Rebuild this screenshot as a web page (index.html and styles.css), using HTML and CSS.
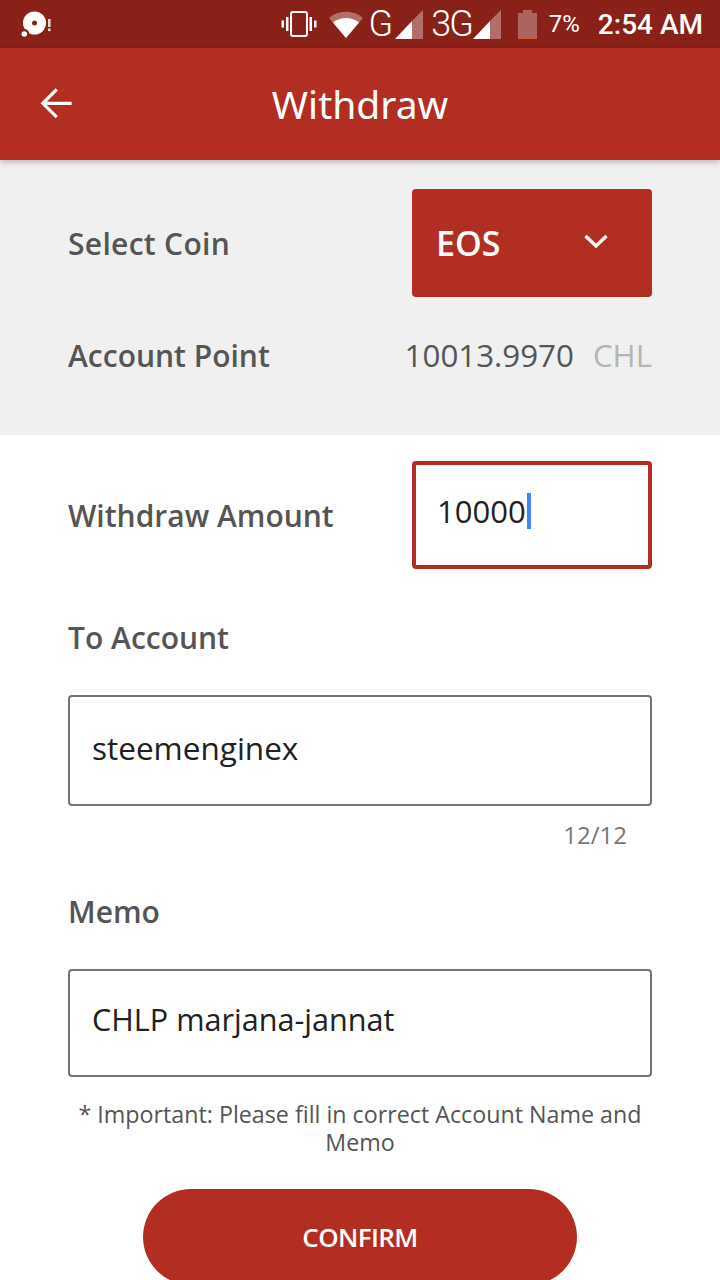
FILE: index.html
```html
<!DOCTYPE html>
<html lang="en">
<head>
  <meta charset="UTF-8" />
  <meta name="viewport" content="width=device-width, initial-scale=1.0"/>
  <title>Withdraw</title>
  <link rel="stylesheet" href="styles.css">
</head>
<body>
  <div class="statusbar">
    <div class="status-left">
      <svg width="34" height="28" viewBox="0 0 34 28">
        <circle cx="14.500" cy="13" r="11.500" fill="#fff"/>
        <circle cx="14.500" cy="13" r="2.500" fill="#8a2119"/>
        <circle cx="4.300" cy="24" r="5" fill="#8a2119"/>
        <circle cx="4.300" cy="24" r="2.800" fill="#fff"/>
        <rect x="28" y="9" width="2.600" height="8" fill="#e8d5d3"/>
        <rect x="28" y="18.500" width="2.600" height="2.600" fill="#e8d5d3"/>
      </svg>
    </div>
    <div class="status-right">
      <svg width="36" height="28" viewBox="0 0 36 28">
        <rect x="10" y="2" width="16" height="24" rx="2" fill="none" stroke="#fff" stroke-width="2"/>
        <path fill="#fff" d="M5 7h2.500v14H5zM0.500 10.500H3v7H0.500zM28.500 7H31v14h-2.500zM33 10.500h2.500v7H33z"/>
      </svg>
      <svg class="ic-wifi" width="34" height="28" viewBox="0 0 34 28">
        <path fill="#fff" opacity=".35" d="M0 8C9-0.500 25-0.500 34 8L17 28z"/>
        <path fill="#fff" d="M4 12.500C11 6.500 23 6.500 30 12.500L17 28z"/>
      </svg>
      <span class="net net-g">G</span>
      <svg width="28" height="29" viewBox="0 0 28 29">
        <path fill="#fff" opacity=".35" d="M28 0v29H17V11z"/>
        <path fill="#fff" d="M17 11v18H0z"/>
      </svg>
      <span class="net net-3g">3G</span>
      <svg width="28" height="29" viewBox="0 0 28 29">
        <path fill="#fff" opacity=".35" d="M28 0v29H17V11z"/>
        <path fill="#fff" d="M17 11v18H0z"/>
      </svg>
      <svg class="ic-bat" width="19" height="29" viewBox="0 0 19 29">
        <path fill="#fff" opacity=".3" d="M5 0h9v3h5v26H0V3h5z"/>
        <rect y="27" width="19" height="2" fill="#e8502c"/>
      </svg>
      <span class="pct">7%</span>
      <span class="clock">2:54 AM</span>
    </div>
  </div>

  <div class="header">
    <svg class="back" width="36" height="36" viewBox="0 0 36 36">
      <path fill="none" stroke="#fff" stroke-width="3.400" d="M34 18H4M18.500 3.500 4 18l14.500 14.500" transform="translate(1 0) scale(.96 .96)"/>
    </svg>
    <div class="title">Withdraw</div>
  </div>

  <div class="coin-section">
    <div class="row">
      <div class="label label-coin">Select Coin</div>
      <div class="select">
        <span>EOS</span>
        <svg width="26" height="18" viewBox="0 0 26 18">
          <path fill="none" stroke="#fff" stroke-width="3.400" d="M2.500 4 13 14 23.500 4"/>
        </svg>
      </div>
    </div>
    <div class="row point-row">
      <div class="label">Account Point</div>
      <div class="point">10013.9970<span class="unit">CHL</span></div>
    </div>
  </div>

  <div class="form">
    <div class="row">
      <div class="label">Withdraw Amount</div>
      <div class="amount"><span>10000</span><i class="caret"></i></div>
    </div>
    <div class="label to-label">To Account</div>
    <div class="field field-to">steemenginex</div>
    <div class="counter">12/12</div>
    <div class="label memo-label">Memo</div>
    <div class="field field-memo">CHLP marjana-jannat</div>
    <div class="note">* Important: Please fill in correct Account Name and Memo</div>
    <div class="confirm">CONFIRM</div>
  </div>
</body>
</html>
```
FILE: styles.css
```css
body {
  margin: 0;
  height: 1280px;
  overflow: hidden;
  background: white;
  font-family: "Open Sans", sans-serif;
  color: #212121;
}
.statusbar {
  height: 48px;
  background-color: #8a2119;
  display: flex;
  justify-content: space-between;
  align-items: center;
  padding: 0 17px 0 20px;
  color: white;
}
.status-left {
  display: flex;
}
.status-right {
  display: flex;
  align-items: center;
}
.ic-wifi {
  margin-left: 12px;
}
.net {
  font-family: Roboto, sans-serif;
  font-size: 36px;
  font-weight: 300;
  letter-spacing: -2px;
}
.net-g {
  margin-left: 6px;
  margin-right: 4px;
}
.net-3g {
  margin-left: 8px;
  margin-right: 1px;
}
.ic-bat {
  margin-left: 17px;
}
.pct {
  font-family: Roboto, sans-serif;
  font-size: 24px;
  margin-left: 12px;
}
.clock {
  font-family: Roboto, sans-serif;
  font-weight: 500;
  font-size: 28px;
  margin-left: 18px;
}

.header {
  height: 112px;
  box-sizing: border-box;
  padding-bottom: 2px;
  background-color: #b22e22;
  box-shadow: 0 2px 6px rgba(0, 0, 0, 0.25);
  position: relative;
  display: flex;
  align-items: center;
  justify-content: center;
}
.back {
  position: absolute;
  left: 38px;
  top: 38px;
}
.title {
  color: white;
  font-size: 39px;
  font-family: "Noto Sans", sans-serif;
}

.coin-section {
  background-color: #f0f0f0;
  padding: 29px 68px 0;
  height: 246px;
}
.row {
  display: flex;
  justify-content: space-between;
  align-items: center;
}
.label {
  font-size: 30px;
  font-weight: 600;
  color: #555;
}
.label-coin {
  letter-spacing: 0.3px;
}
.select {
  width: 240px;
  height: 108px;
  box-sizing: border-box;
  background-color: #b22e22;
  border-radius: 4px;
  display: flex;
  align-items: center;
  justify-content: space-between;
  padding: 0 43px 0 24px;
  color: white;
  font-size: 34px;
  font-weight: 600;
}
.select svg {
  margin-top: -4px;
}
.point-row {
  margin-top: 37px;
}
.point {
  font-size: 31.300px;
  color: #555;
}
.unit {
  color: #b5b5b5;
  margin-left: 19px;
}

.form {
  padding: 26px 68px 0;
}
.amount {
  width: 240px;
  height: 108px;
  box-sizing: border-box;
  border: 4px solid #b22e22;
  border-radius: 4px;
  padding: 0 0 8px 21px;
  display: flex;
  align-items: center;
  font-size: 31px;
}
.caret {
  width: 4px;
  height: 36px;
  background-color: #4285f4;
  margin-left: 1px;
}
.to-label {
  margin-top: 48px;
}
.field {
  height: 108px;
  box-sizing: border-box;
  border: 2px solid #757575;
  border-radius: 4px;
  padding: 0 0 8px 22px;
  display: flex;
  align-items: center;
  font-size: 30.600px;
}
.field-to {
  height: 111px;
  margin-top: 37px;
  padding-bottom: 6px;
  font-size: 31.500px;
}
.counter {
  text-align: right;
  padding-right: 25px;
  margin-top: 12px;
  font-size: 24px;
  color: #757575;
}
.memo-label {
  margin-top: 40px;
  margin-bottom: 37px;
}
.note {
  text-align: center;
  font-size: 23.250px;
  line-height: 28px;
  color: #555;
  margin: 23px -4px 0;
}
.confirm {
  width: 434px;
  height: 96px;
  margin: 33px auto 0;
  border-radius: 48px;
  background-color: #b22e22;
  color: white;
  font-size: 26px;
  font-weight: 600;
  letter-spacing: -0.6px;
  display: flex;
  align-items: center;
  justify-content: center;
}
```
